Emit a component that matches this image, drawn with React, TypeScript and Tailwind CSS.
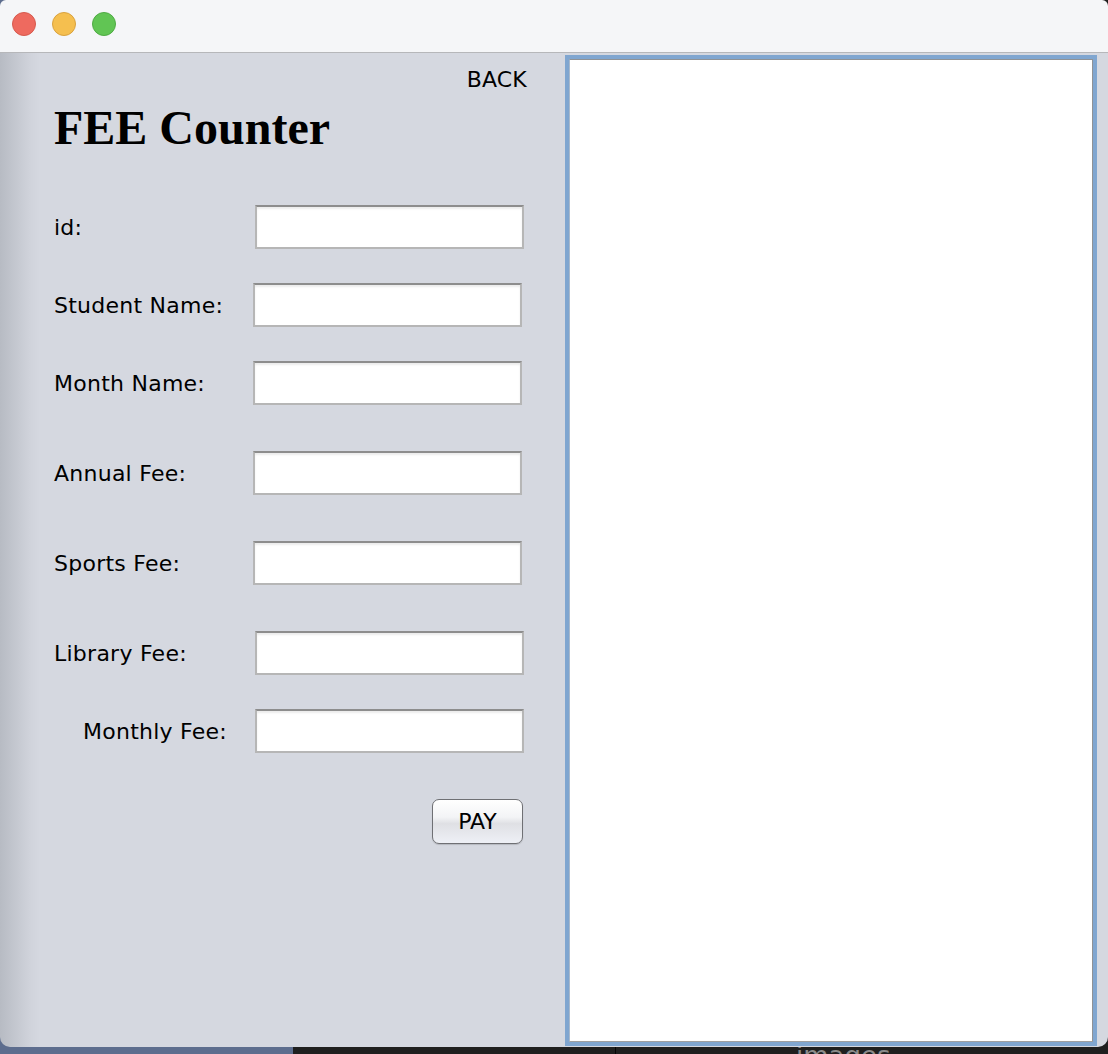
import React from "react";

const sans = { fontFamily: '"DejaVu Sans", "Liberation Sans", sans-serif' };

function Field({ label, mt, labelPl, inputLeft }: { label: string; mt: string; labelPl: string; inputLeft: string }) {
  return (
    <div className={`flex h-[44px] items-center ${mt}`}>
      <div className={`text-[22px] tracking-[0.25px] text-black ${labelPl}`} style={sans}>
        {label}
      </div>
      <div
        className={`absolute h-[44px] w-[269px] border-2 border-[#b6b6b6] border-t-[#8d8d8d] bg-white shadow-[inset_0_2px_2px_rgba(0,0,0,0.08)] ${inputLeft}`}
      />
    </div>
  );
}

export default function App() {
  return (
    <div className="flex h-[1054px] w-[1108px] flex-col overflow-hidden bg-[linear-gradient(to_right,#5d6d8e_293px,#1f1f1f_293px)]">
      <div className="flex h-[1047px] w-[1108px] flex-col overflow-hidden rounded-[10px] rounded-t-[6px]">
        {/* title bar */}
        <div className="flex h-[53px] shrink-0 items-center gap-[16px] border-b border-[#b6b7ba] bg-[#f5f6f8] pl-[12px] pb-[5px]">
          <div className="h-[24px] w-[24px] rounded-full border border-[#d65a4e] bg-[#ee6a5f]" />
          <div className="h-[24px] w-[24px] rounded-full border border-[#d9a23f] bg-[#f5bf4f]" />
          <div className="h-[24px] w-[24px] rounded-full border border-[#4fab44] bg-[#61c554]" />
        </div>
        {/* body */}
        <div className="flex flex-1 bg-[linear-gradient(to_right,#b7bbc3_0px,#d0d3db_30px,#d5d8e0_40px)]">
          <div className="relative w-[565px] shrink-0 pl-[54px]">
            <div className="mt-[14px] flex h-[26px] w-[473px] justify-end text-[22px] leading-[26px] tracking-[0.2px] text-black" style={sans}>
              BACK
            </div>
            <div
              className="mt-[7px] h-[56px] text-[48px] font-bold leading-[56px] text-black"
              style={{ fontFamily: '"Liberation Serif", "Times New Roman", serif' }}
            >
              FEE Counter
            </div>
            <div className="relative">
              <Field label="id:" mt="mt-[49px]" labelPl="" inputLeft="left-[201px]" />
            </div>
            <div className="relative">
              <Field label="Student Name:" mt="mt-[34px]" labelPl="" inputLeft="left-[199px]" />
            </div>
            <div className="relative">
              <Field label="Month Name:" mt="mt-[34px]" labelPl="" inputLeft="left-[199px]" />
            </div>
            <div className="relative">
              <Field label="Annual Fee:" mt="mt-[46px]" labelPl="" inputLeft="left-[199px]" />
            </div>
            <div className="relative">
              <Field label="Sports Fee:" mt="mt-[46px]" labelPl="" inputLeft="left-[199px]" />
            </div>
            <div className="relative">
              <Field label="Library Fee:" mt="mt-[46px]" labelPl="" inputLeft="left-[201px]" />
            </div>
            <div className="relative">
              <Field label="Monthly Fee:" mt="mt-[34px]" labelPl="pl-[29px]" inputLeft="left-[201px]" />
            </div>
            <div className="mt-[46px] flex w-[469px] justify-end">
              <button
                className="flex h-[45px] w-[91px] items-center justify-center rounded-[7px] border border-[#6f7074] bg-[linear-gradient(to_bottom,#ffffff_0%,#f3f4f6_40%,#dfe0e4_55%,#eef0f6_100%)] text-[22px] text-black shadow-[0_1px_1px_rgba(0,0,0,0.15)]"
                style={sans}
              >
                PAY
              </button>
            </div>
          </div>
          {/* right panel */}
          <div className="mt-[2px] mb-[1px] w-[532px] shrink-0 border-[4px] border-[#80a6d0]">
            <div className="h-full w-full border border-[#909295] border-l-[#a9b9cc] border-b-[#a0a0a0] bg-white" />
          </div>
        </div>
      </div>
      <div className="relative flex h-[7px] overflow-hidden">
        <div className="ml-[615px] h-[7px] w-[1px] bg-[#050505]" />
        <div className="-mt-[4px] ml-[180px] text-[26px] leading-[26px] text-[#8a8a8a]" style={sans}>
          images
        </div>
      </div>
    </div>
  );
}
